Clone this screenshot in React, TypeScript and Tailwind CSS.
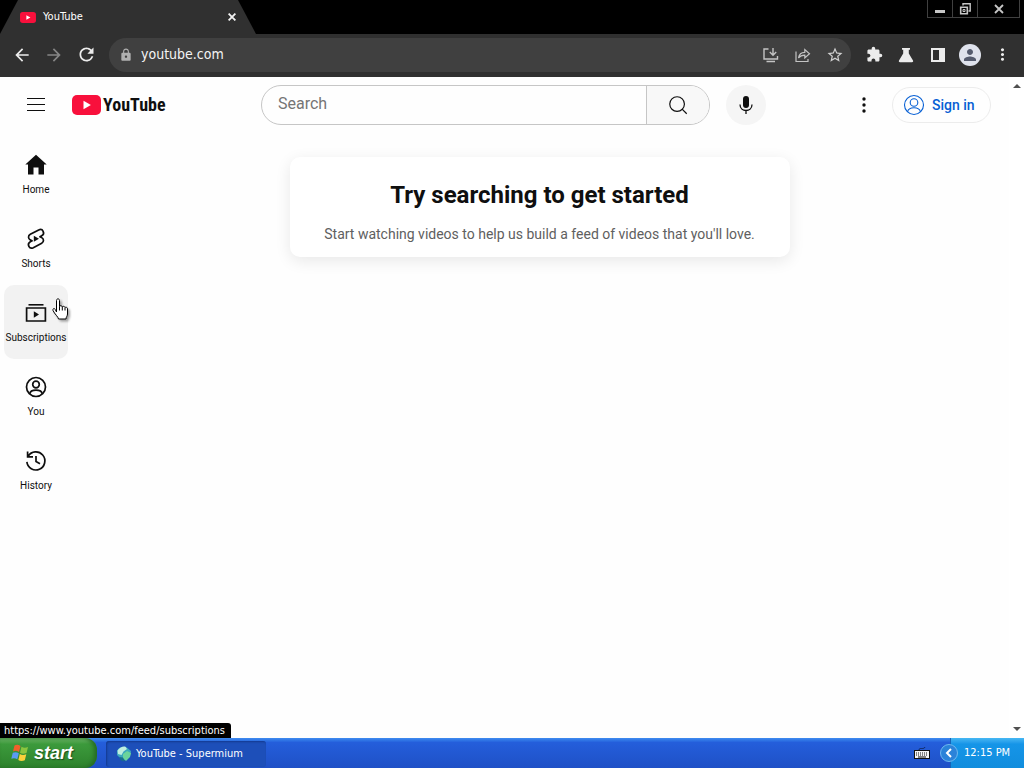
import { type ReactNode } from 'react';
import {
  MdArrowBack,
  MdArrowForward,
  MdExtension,
  MdLock,
  MdMoreVert,
  MdPerson,
  MdRefresh,
  MdStarBorder,
} from 'react-icons/md';

const uiFont = "font-['Tahoma','DejaVu_Sans_Condensed','DejaVu_Sans',sans-serif]";

interface NavItem {
  label: string;
  icon: ReactNode;
  hovered?: boolean;
}

const navItems: NavItem[] = [
  {
    label: 'Home',
    icon: <path fill="currentColor" d="M4 21.500V11.500H1.300L12 1.800l10.700 9.700H20v10h-5.500v-7h-5v7H4z" />,
  },
  {
    label: 'Shorts',
    icon: (
      <>
        <path
          fill="none"
          stroke="currentColor"
          strokeWidth="1.7"
          strokeLinejoin="round"
          d="m14.7 2.9-8.4 4.4c-2.5 1.3-2.3 4.7.2 5.8l1.6.7-1.8 1c-3.8 2.2-1.1 7.9 3 5.9l8.400-4.400c2.500-1.300 2.300-4.700-.2-5.800l-1.600-.7 1.800-1c3.800-2.200 1.100-7.900-3-5.900z"
        />
        <path fill="currentColor" d="M9.8 8.8v6l5.200-3z" />
      </>
    ),
  },
  {
    label: 'Subscriptions',
    hovered: true,
    icon: (
      <>
        <path fill="currentColor" d="M4.500 3h15v1.600h-15z" />
        <path fill="none" stroke="currentColor" strokeWidth="1.7" d="M2.600 7h18.800v13H2.600z" />
        <path fill="currentColor" d="M9.800 10.300v6.400l5.200-3.200z" />
      </>
    ),
  },
  {
    label: 'You',
    icon: (
      <g fill="none" stroke="currentColor" strokeWidth="1.7">
        <circle cx="12" cy="12" r="9.500" />
        <circle cx="12" cy="9.500" r="3.300" />
        <path d="M5.700 18.800c.8-5 11.800-5 12.600 0" />
      </g>
    ),
  },
  {
    label: 'History',
    icon: (
      <g fill="none" stroke="currentColor" strokeWidth="1.7">
        <path d="M4.200 7.200a9 9 0 1 1-1.300 5.600M3.600 2.500v5.400H9" />
        <path d="M12 7v5.400l4 2.300" />
      </g>
    ),
  },
];

function ToolButton({ label, children, dim }: { label: string; children: ReactNode; dim?: boolean }) {
  return (
    <button
      type="button"
      aria-label={label}
      className={`flex h-8 w-8 shrink-0 items-center justify-center ${dim ? 'text-[#858585]' : 'text-[#ececec]'}`}
    >
      {children}
    </button>
  );
}

function PlayBadge({ className }: { className: string }) {
  return (
    <svg viewBox="0 0 29 20" className={className} aria-hidden="true">
      <rect width="29" height="20" rx="5" fill="#f8103c" />
      <path d="M11.500 5.800v8.400l7.400-4.200z" fill="#fff" />
    </svg>
  );
}

function BrowserChrome() {
  return (
    <header className={`shrink-0 bg-black text-white ${uiFont}`}>
      <div className="flex h-[34px] items-start justify-between">
        <div className="flex h-full w-[256px] items-center bg-[#303030] pr-4 pl-5 [clip-path:polygon(0_100%,18px_0,238px_0,100%_100%)]">
          <PlayBadge className="h-[11px] w-4" />
          <span className="ml-[7px] flex-1 text-[11px]">YouTube</span>
          <button type="button" aria-label="Close tab" className="flex h-4 w-4 items-center justify-center">
            <svg viewBox="0 0 8 8" className="h-2 w-2" stroke="#f4f4f4" strokeWidth="1.8">
              <path d="m.6.6 6.800 6.800M7.400.6.6 7.400" />
            </svg>
          </button>
        </div>
        <div className="mr-1 flex h-[18px] divide-x divide-[#404040] border border-t-0 border-[#404040] text-[#c6c6c6]">
          <button type="button" aria-label="Minimize" className="flex w-[25px] items-center justify-center">
            <svg viewBox="0 0 12 12" className="h-3 w-3">
              <path d="M1 7h10v3H1z" fill="currentColor" />
            </svg>
          </button>
          <button type="button" aria-label="Restore" className="flex w-[25px] items-center justify-center">
            <svg viewBox="0 0 12 12" className="h-3 w-3" fill="none" stroke="currentColor">
              <path d="M4 2.500V.8h7.200V8H9.500" strokeWidth="1.4" />
              <path d="M1.700 4.200h6.600v6.600H1.700z" strokeWidth="1.6" />
              <path d="M4 6.500h2v2H4z" />
            </svg>
          </button>
          <button type="button" aria-label="Close" className="flex w-[41px] items-center justify-center">
            <svg viewBox="0 0 10 10" className="h-[10px] w-[10px]" stroke="currentColor" strokeWidth="1.8">
              <path d="m1 1 8 8M9 1 1 9" />
            </svg>
          </button>
        </div>
      </div>

      <div className="flex h-[43px] items-center bg-[#303030] px-[6px] pb-[2px]">
        <ToolButton label="Back">
          <MdArrowBack size={20} />
        </ToolButton>
        <ToolButton label="Forward" dim>
          <MdArrowForward size={20} />
        </ToolButton>
        <ToolButton label="Reload">
          <MdRefresh size={21} />
        </ToolButton>
        <div className="mx-[7px] flex h-[34px] min-w-0 flex-1 items-center rounded-full bg-[#404040] pl-[10px]">
          <MdLock size={14} className="text-[#b0b0b0]" />
          <input
            aria-label="Address"
            defaultValue="youtube.com"
            className="ml-2 min-w-0 flex-1 bg-transparent pb-px text-sm text-[#f4f4f4] outline-none"
          />
          <ToolButton label="Install">
            <svg viewBox="0 0 18 18" className="h-[18px] w-[18px] text-[#c4c4c4]" fill="none" stroke="currentColor" strokeWidth="1.4">
              <path d="M6.500 3H2v10h13.500v-3M4.500 15.500h8.500" />
              <path d="M11 2v7M7.800 6 11 9.200 14.200 6" />
            </svg>
          </ToolButton>
          <ToolButton label="Share">
            <svg viewBox="0 0 18 18" className="h-[18px] w-[18px] text-[#c4c4c4]" fill="none" stroke="currentColor" strokeWidth="1.2">
              <path d="M2 5.500v10h12V13" />
              <path d="M4.500 12c.6-4 3-5.700 6.300-5.700V3.500l4.700 4.300-4.700 4.200V9.200C8 9.200 6 10 4.500 12z" />
            </svg>
          </ToolButton>
          <ToolButton label="Bookmark">
            <MdStarBorder size={18} className="text-[#d0d0d0]" />
          </ToolButton>
        </div>
        <ToolButton label="Extensions">
          <MdExtension size={17} />
        </ToolButton>
        <ToolButton label="Experiments">
          <svg viewBox="0 0 18 18" className="h-[18px] w-[18px]" fill="currentColor">
            <path d="M5 2h8v1.800h-1.200v3.700L16 14.500c.5 1-.1 1.700-1 1.700H3c-.9 0-1.500-.7-1-1.700l4.200-7V3.800H5z" />
          </svg>
        </ToolButton>
        <ToolButton label="Side panel">
          <svg viewBox="0 0 18 18" className="h-[18px] w-[18px]" fill="none" stroke="currentColor">
            <path d="M3 3h12v12H3z" strokeWidth="2" />
            <path d="M12 3v12" strokeWidth="4" />
          </svg>
        </ToolButton>
        <ToolButton label="Profile">
          <span className="flex h-[22px] w-[22px] items-center justify-center rounded-full bg-[#dfe2ec]">
            <MdPerson size={18} className="text-[#555b6e]" />
          </span>
        </ToolButton>
        <ToolButton label="Menu">
          <MdMoreVert size={19} />
        </ToolButton>
      </div>
    </header>
  );
}

function Masthead() {
  return (
    <div className="flex h-14 items-center">
      <div className="flex w-60 shrink-0 items-center pl-4">
        <button type="button" aria-label="Guide" className="flex h-10 w-10 items-center justify-center">
          <svg viewBox="0 0 20 14" className="h-[14px] w-5" stroke="#0f0f0f">
            <path d="M1 .5h18M1 6.500h18M1 12.500h18" />
          </svg>
        </button>
        <a href="#home" aria-label="YouTube Home" className="ml-4 flex items-center gap-[2px]">
          <PlayBadge className="h-5 w-[29px]" />
          <span className="font-['Liberation_Sans_Narrow','Roboto_Condensed','Liberation_Sans',sans-serif] text-lg leading-6 font-bold text-[#0f0f0f]">
            YouTube
          </span>
        </a>
      </div>

      <div className="flex min-w-0 flex-1 items-center justify-center gap-4 pl-[2px]">
        <form className="flex h-10 w-[449px] min-w-0 rounded-full border border-[#c6c6c6]">
          <input
            type="text"
            aria-label="Search"
            placeholder="Search"
            className="min-w-0 flex-1 rounded-l-full bg-transparent pb-[2px] pl-4 text-base outline-none placeholder:text-[#757575]"
          />
          <button
            type="button"
            aria-label="Search videos"
            className="flex w-[63px] items-center justify-center rounded-r-full border-l border-[#c6c6c6] bg-[#f8f8f8]"
          >
            <svg viewBox="0 0 24 24" className="h-[22px] w-[22px]" fill="none" stroke="#0f0f0f" strokeWidth="1.3">
              <circle cx="11" cy="11" r="8" />
              <path d="m16.500 16.500 5 5" />
            </svg>
          </button>
        </form>
        <button
          type="button"
          aria-label="Search with your voice"
          className="flex h-10 w-10 shrink-0 items-center justify-center rounded-full bg-[#f5f5f5]"
        >
          <svg viewBox="0 0 24 24" className="h-6 w-6">
            <rect x="9" y="3" width="6" height="12" rx="3" fill="#0f0f0f" />
            <path d="M6 11.500c0 8 12 8 12 0M12 17.500V21" fill="none" stroke="#0f0f0f" strokeWidth="1.300" />
          </svg>
        </button>
      </div>

      <div className="flex w-56 shrink-0 items-center justify-end gap-2 pr-[18px]">
        <button type="button" aria-label="Settings" className="flex h-10 w-10 items-center justify-center">
          <svg viewBox="0 0 24 24" className="h-6 w-6" fill="#0f0f0f">
            <circle cx="12" cy="6" r="1.7" />
            <circle cx="12" cy="12" r="1.7" />
            <circle cx="12" cy="18" r="1.7" />
          </svg>
        </button>
        <a
          href="#signin"
          className="flex h-9 w-[99px] items-center gap-[6px] rounded-full border border-[#ececec] pb-px pl-[9px] text-sm font-medium text-[#065fd4]"
        >
          <svg viewBox="0 0 24 24" className="h-6 w-6" fill="none" stroke="currentColor" strokeWidth="1.100">
            <circle cx="12" cy="12" r="9.500" />
            <circle cx="12" cy="9.500" r="3.800" />
            <path d="M5.500 19c1.200-5.600 11.800-5.600 13 0" />
          </svg>
          Sign in
        </a>
      </div>
    </div>
  );
}

function Sidebar() {
  return (
    <nav className="flex w-[72px] shrink-0 flex-col px-1 pt-1">
      {navItems.map((item) => (
        <a
          key={item.label}
          href={`#${item.label.toLowerCase()}`}
          className={`flex h-[74px] flex-col items-center rounded-[10px] pt-4 text-[#0f0f0f] ${
            item.hovered ? 'bg-[#f2f2f2]' : ''
          }`}
        >
          <svg viewBox="0 0 24 24" className="h-6 w-6" aria-hidden="true">
            {item.icon}
          </svg>
          <span className="mt-[6px] text-[10px] leading-[14px]">{item.label}</span>
        </a>
      ))}
    </nav>
  );
}

function Scrollbar() {
  return (
    <div className="flex w-[15px] shrink-0 flex-col items-center justify-between py-[7px]" aria-hidden="true">
      <svg viewBox="0 0 8 4" className="h-1 w-2">
        <path d="m0 4 4-4 4 4z" fill="#505050" />
      </svg>
      <svg viewBox="0 0 8 4" className="h-1 w-2">
        <path d="m0 0 4 4 4-4z" fill="#505050" />
      </svg>
    </div>
  );
}

function HandCursor() {
  return (
    <svg viewBox="0 0 20 24" className="absolute top-[221px] left-[51px] h-6 w-5 drop-shadow-[2px_2px_1px_rgba(0,0,0,0.35)]" aria-hidden="true">
      <path
        d="M5.500 14V2.500c0-2.200 3-2.200 3 0v6c.3-1.200 2.700-1 2.800.4.500-1 2.500-.7 2.700.7.600-.8 2.500-.3 2.500 1.200V16c0 2-1.500 3-1.500 5H7.500c0-2-4-5-5.500-8.500-.8-2 1.500-2.500 2.300-1z"
        fill="#fff"
        stroke="#000"
      />
      <path d="M8.500 8.500v4M11.300 9v3.500M14 10v2.500" stroke="#000" fill="none" />
    </svg>
  );
}

function Taskbar() {
  return (
    <footer className={`flex h-[30px] shrink-0 bg-linear-to-b from-[#3f8cf0] via-[#245edb] via-15% to-[#1f50c6] text-[11px] text-white ${uiFont}`}>
      <button
        type="button"
        className="flex w-[97px] items-center gap-1 rounded-r-[12px] bg-linear-to-b from-[#6fb96a] via-[#3c9a3c] via-20% to-[#2d822c] pl-[10px] shadow-[inset_-3px_0_4px_#256b24]"
      >
        <svg viewBox="0 0 20 18" className="h-[18px] w-5" aria-hidden="true">
          <path d="M4.500 1.500q3-1.500 6 .5l-1.500 6q-3-2-6-.5z" fill="#f0602b" />
          <path d="M11.500 2.800q3 1.800 6.500.2l-1.500 6q-3.500 1.600-6.500-.2z" fill="#8bc53f" />
          <path d="M2.800 8.800q3-1.500 6 .5l-1.500 6q-3-2-6-.5z" fill="#5b9bf3" />
          <path d="M9.800 10q3 1.800 6.500.2l-1.500 6q-3.500 1.600-6.500-.2z" fill="#fbd03b" />
        </svg>
        <span className="font-['Liberation_Sans',Arial,sans-serif] text-lg leading-6 font-bold italic [text-shadow:1px_1px_1px_#1d4d1c]">
          start
        </span>
      </button>
      <button
        type="button"
        className="mt-[3px] mb-px ml-[9px] flex w-40 items-center gap-1 rounded-[3px] bg-[#1d4fb9] pl-[10px] shadow-[inset_1px_1px_2px_#133a8f]"
      >
        <svg viewBox="0 0 16 16" className="h-4 w-4" aria-hidden="true">
          <path d="M1 5C3 0 10 0 12 2.500l3 2.500-1 5-4 4-5-1-4-4z" fill="#3ba8bd" />
          <path d="M1.500 4.500Q5 0 9.500.7L11 3 7.500 5.500 5.500 9 2 8z" fill="#bfeee0" />
          <path d="m7 8 4-3 4 2-1 4-4 4-3-3z" fill="#6bd49b" />
          <path d="m3 11 4 .5 2 4-4-1z" fill="#176f8c" />
        </svg>
        YouTube - Supermium
      </button>
      <div className="ml-auto flex items-center">
        <svg viewBox="0 0 16 14" className="mr-5 h-[14px] w-4" aria-hidden="true">
          <path d="M5 4c0-3 5 0 6-3" fill="none" stroke="#10275e" />
          <rect x=".5" y="4.500" width="15" height="8" fill="#f4f4f4" stroke="#111" />
          <path d="M2 7h12M2 9h12" stroke="#111" strokeDasharray="1 1" />
          <path d="M4 11h8" stroke="#111" />
        </svg>
        <div className="flex h-full w-[74px] items-center bg-linear-to-b from-[#45b7f3] via-[#1595e8] via-20% to-[#118ddd] [box-shadow:inset_1px_0_#1463b8]">
          <button
            type="button"
            aria-label="Show hidden icons"
            className="-ml-[10px] flex h-[18px] w-[18px] shrink-0 items-center justify-center rounded-full border border-[#6fb9ef] bg-[#2b83d9]"
          >
            <svg viewBox="0 0 8 10" className="h-[10px] w-2" fill="none" stroke="#fff" strokeWidth="2">
              <path d="M6 1 2 5l4 4" />
            </svg>
          </button>
          <time className="ml-[6px] whitespace-nowrap">12:15 PM</time>
        </div>
      </div>
    </footer>
  );
}

export default function App() {
  return (
    <div className="flex min-h-screen flex-col bg-white font-['Roboto',sans-serif]">
      <BrowserChrome />

      <div className="relative flex flex-1">
        <div className="flex min-w-0 flex-1 flex-col bg-[#fefefe]">
          <Masthead />
          <div className="flex flex-1">
            <Sidebar />
            <main className="flex-1 pt-6 pr-4 pl-[14px]">
              <section className="mx-auto max-w-[500px] rounded-[10px] bg-white px-6 pt-5 pb-[13px] text-center shadow-[0_4px_16px_rgba(0,0,0,0.09)]">
                <h1 className="text-2xl leading-9 font-bold text-[#0f0f0f]">Try searching to get started</h1>
                <p className="mt-[11px] text-sm leading-5 text-[#606060]">
                  Start watching videos to help us build a feed of videos that you'll love.
                </p>
              </section>
            </main>
          </div>
        </div>
        <Scrollbar />
        <HandCursor />
        <div className={`absolute bottom-0 left-0 rounded-tr-[3px] bg-black pr-[6px] pl-1 text-[11px] leading-[15px] text-white ${uiFont}`}>
          https://www.youtube.com/feed/subscriptions
        </div>
      </div>

      <Taskbar />
    </div>
  );
}
